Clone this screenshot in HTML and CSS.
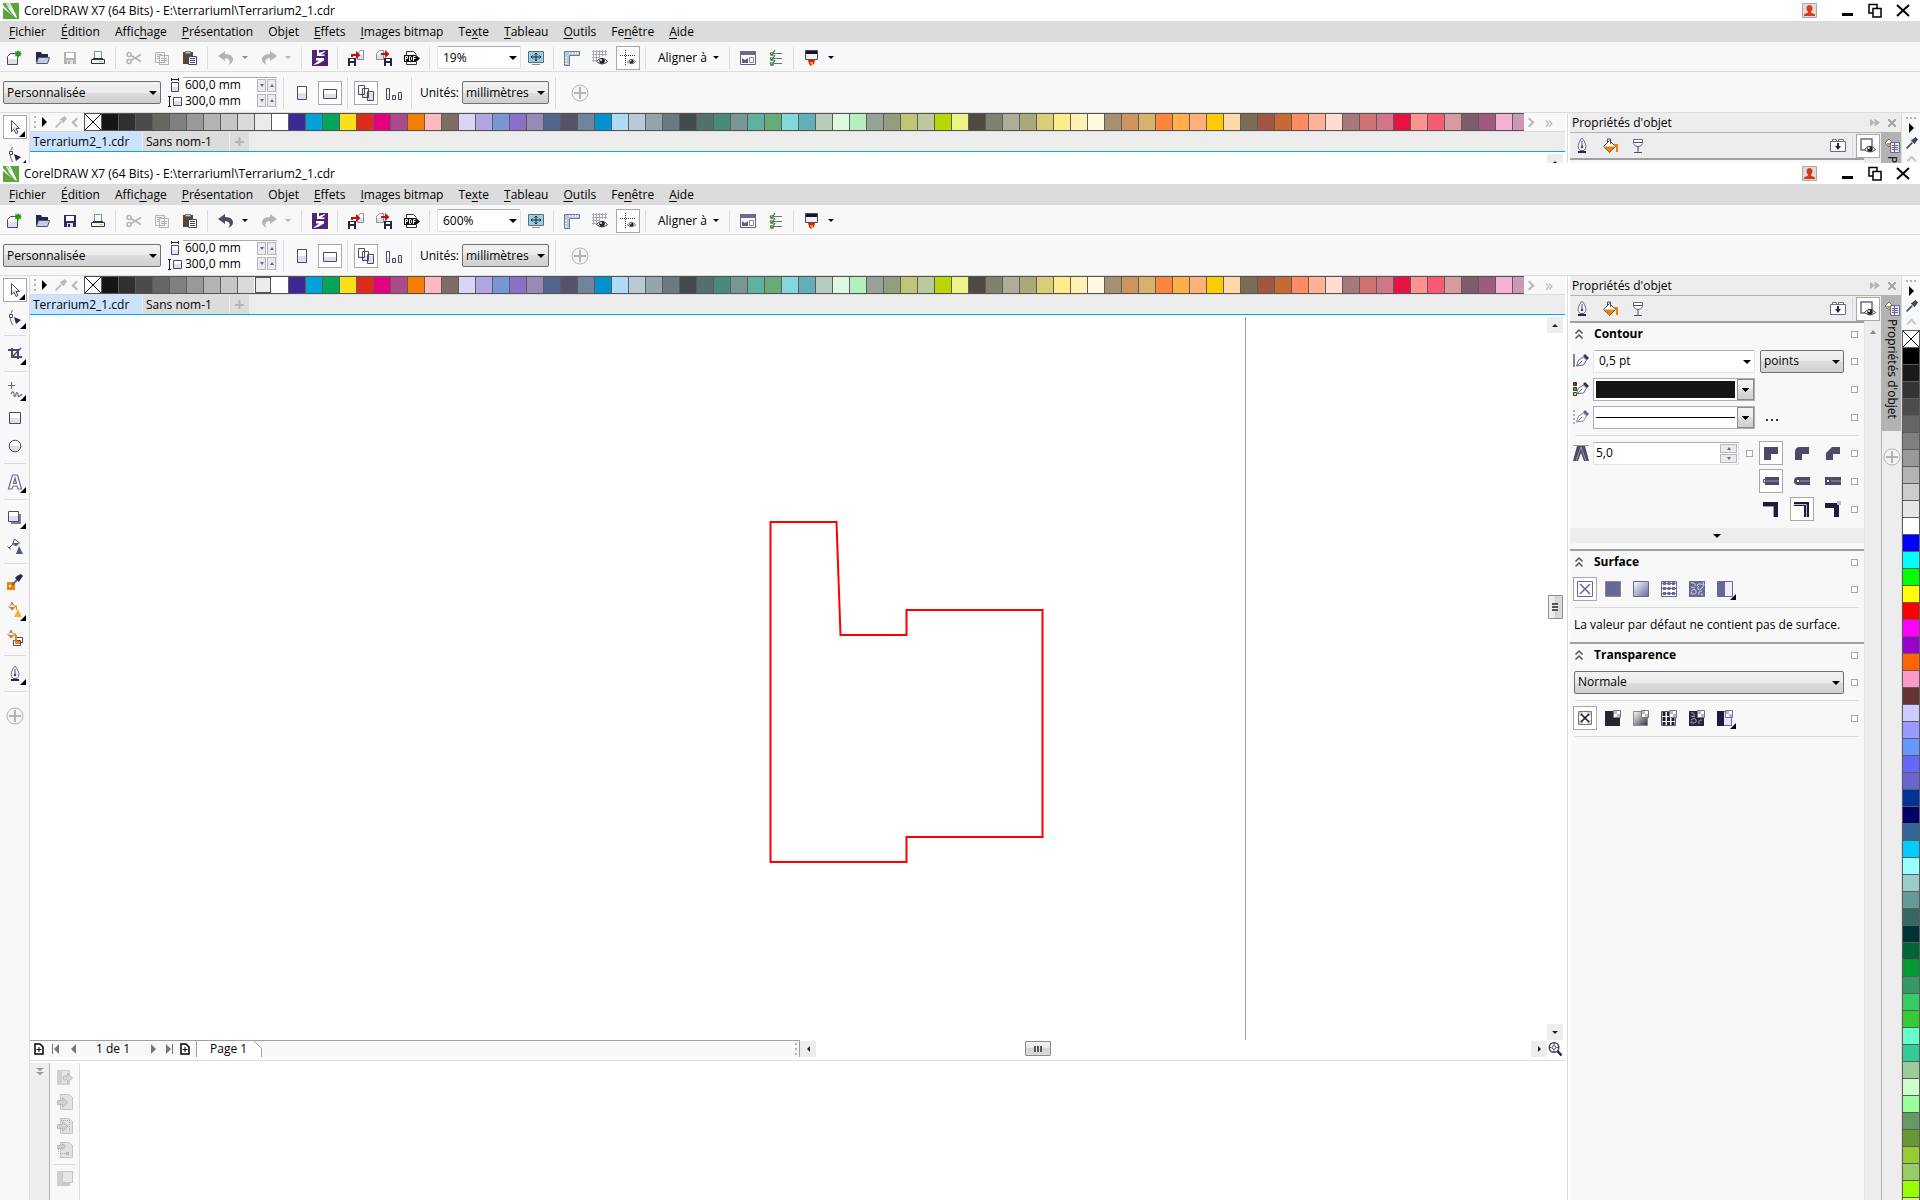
FILE: index.html
```html
<!DOCTYPE html>
<html lang="fr">
<head>
  <meta charset="UTF-8">
  <meta name="viewport" content="width=device-width, initial-scale=1.0">
  <title>CorelDRAW X7 (64 Bits) - E:\terrariuml\Terrarium2_1.cdr</title>
  <link rel="stylesheet" href="styles.css">
</head>
<body>

<svg class="sprite" aria-hidden="true">
  <defs>
    <linearGradient id="gPaper" x1="0" y1="0" x2="0" y2="1"><stop offset=".5" stop-color="#fff"/><stop offset=".5" stop-color="#dfdfea"/></linearGradient>
    <linearGradient id="gFill" x1="0" y1="0" x2="1" y2="1"><stop offset="0" stop-color="#fff"/><stop offset="1" stop-color="#67679a"/></linearGradient>
    <linearGradient id="gDark" x1="0" y1="0" x2="1" y2="1"><stop offset="0" stop-color="#fff"/><stop offset="1" stop-color="#333"/></linearGradient>
  </defs>
  <symbol id="logo" viewBox="0 0 16 16"><path fill="#5ba63c" d="M0 0h16v16H0z"/><path fill="#fff" d="M1 0l11 14 2 1-1-3L7 0H5l4 7-5-7H3l4 7zM0 2l6 7 4 4L0 5z"/></symbol>
  <symbol id="new" viewBox="0 0 16 16"><path fill="url(#gPaper)" stroke="#4c4a66" d="M1.500 6.500l3-3h7v11h-10z"/><path fill="#249a0c" d="M12 0l1.200 1.800L15 1l-.5 2 1.500.5-1.500 1 .5 2-1.800-.8L12 8l-1-2.300L9 6.500l.5-2L8 3.500 9.500 3 9 1l2 .8z"/></symbol>
  <symbol id="open" viewBox="0 0 16 16"><path fill="#26264a" d="M2 13V2h5l1 2h6v3H5z"/><path fill="#c9cde0" stroke="#55557c" d="M4.500 7.500h11l-2 6h-11z"/></symbol>
  <symbol id="save" viewBox="0 0 16 16"><path fill="currentColor" d="M2 2h12v12H2z"/><path fill="#fff" d="M4 3h8v5H4z"/><path fill="#dde" d="M5 10h6v4H5z"/><path fill="currentColor" d="M6 11h2v3H6z"/></symbol>
  <symbol id="print" viewBox="0 0 16 16"><path fill="#fff" stroke="#5aa58c" d="M4.500 9V1.500h7V9"/><path fill="#f4f4f8" stroke="#33334d" d="M1.500 9.500h13v4h-13z"/><path stroke="#e8dc30" d="M9 11.500h4"/><path stroke="#33334d" stroke-width="2" d="M3 9h10"/></symbol>
  <symbol id="cut" viewBox="0 0 16 16"><g fill="none" stroke="currentColor" stroke-width="1.500"><circle cx="3" cy="4.500" r="2"/><circle cx="3" cy="11.500" r="2"/><path d="M5 5.500l10 6M5 10.500l10-6"/></g></symbol>
  <symbol id="copy" viewBox="0 0 16 16"><g fill="#f4f4f4" stroke="currentColor"><path d="M1.500 2.500h9v10h-9zM5.500 5.500h9v9h-9z"/><path d="M3 4.500h5M7 8.500h6M7 10.500h6M7 12.500h4M3 6.500h2M3 8.500h2"/></g></symbol>
  <symbol id="paste" viewBox="0 0 16 16"><path fill="#57483a" d="M1 2h10v12H1z"/><path fill="#bcd" stroke="#777" d="M3.500 1.500h5v2h-5z"/><path fill="#fff" stroke="#3c4664" d="M6.500 6.500h8v8h-8z"/><path stroke="#3c4664" d="M8 8.500h5M8 10.500h5M8 12.500h5"/></symbol>
  <symbol id="undo" viewBox="0 0 16 16"><path fill="currentColor" d="M0 6l7-5v3c6 0 8 3 8 5.500S13 14 10 15c2-2 2-3 1.500-4.500S9 8 7 8v3z"/></symbol>
  <symbol id="redo" viewBox="0 0 16 16"><path fill="currentColor" d="M16 6L9 1v3c-6 0-8 3-8 5.500S3 14 6 15c-2-2-2-3-1.500-4.500S7 8 9 8v3z"/></symbol>
  <symbol id="search" viewBox="0 0 16 16"><path fill="#4f2479" d="M0 0h16v16H0z"/><path fill="#fff" d="M5 0h2v3l6-2v1L9 4.500h4L12 6H5zM4 8h8v2.500L6 14l-5 1 6-4.500H4z"/></symbol>
  <symbol id="import" viewBox="0 0 16 16"><path fill="url(#gPaper)" stroke="#4c4a66" stroke-opacity=".6" d="M9.500 3.500l3-3h3v9h-6z"/><path fill="#26264a" d="M0 8h8v8H0z"/><path fill="#fff" d="M2 9h4v2H2zM2 13h4v3H2z"/><path fill="none" stroke="#c3120a" stroke-width="2" d="M4 7V5h5"/><path fill="#c3120a" d="M8 1l4.500 4L8 9z"/></symbol>
  <symbol id="export" viewBox="0 0 16 16"><path fill="url(#gPaper)" stroke="#4c4a66" stroke-opacity=".6" d="M.5 3.500l3-3h4v9h-7z"/><path fill="#26264a" d="M8 8h8v8H8z"/><path fill="#fff" d="M10 9h4v2h-4zM10 13h4v3h-4z"/><path stroke="#c3120a" stroke-width="2" d="M5 4h5"/><path fill="#c3120a" d="M9 0l4.500 4L9 8z"/></symbol>
  <symbol id="pdf" viewBox="0 0 16 16"><path fill="#fff" stroke="#33334d" d="M2.500 5V1.500h7l3 3M2.500 11v3.500h10V12"/><path fill="#111" d="M0 5h12l4 3.500-4 3.500H0z"/><path fill="none" stroke="#fff" d="M1.500 11V6.500h2v2h-2M5.500 6.500h1l1 1v2l-1 1h-1zM9.500 11V6.500h2M9.500 8.500h2"/></symbol>
  <symbol id="fit" viewBox="0 0 16 16"><path fill="#8fd0dd" stroke="#6b6b80" d="M.5 1.500h15v11H.5z"/><path fill="none" stroke="#1d1d33" d="M8 3v8M3 7h10M6.500 4.500L8 3l1.500 1.500M6.500 9.500L8 11l1.500-1.500M4.500 5.500L3 7l1.500 1.500M11.500 5.500L13 7l-1.500 1.500"/><path fill="#8a8aa0" d="M4 14h8v1H4z"/></symbol>
  <symbol id="ruler" viewBox="0 0 16 16"><path fill="#b9c8dc" stroke="#6c7898" d="M.5 1.500h15v4h-10v10h-5z"/><path stroke="#fff" d="M5.500 2v2M8.500 2v2M11.500 2v2M13.500 2v2M1 7.500h2M1 10.500h2M1 13.500h2"/></symbol>
  <symbol id="eye" viewBox="0 0 12 8"><path fill="#fff" stroke="#444" d="M.5 4.500Q6-2 11.500 4.500 6 9.500.5 4.500z"/><circle cx="6" cy="4" r="2.800" fill="#222"/><circle cx="5" cy="3" r="1" fill="#fff"/></symbol>
  <symbol id="grideye" viewBox="0 0 16 16"><path stroke="#aab" fill="none" d="M1.500 0v12M4.500 0v12M7.500 0v8M10.500 0v6M13.500 0v6M0 1.500h15M0 4.500h15M0 7.500h7M0 10.500h5"/><use href="#eye" x="4" y="7" width="12" height="8"/></symbol>
  <symbol id="guides" viewBox="0 0 16 16"><path stroke="#333" stroke-dasharray="1 1" fill="none" d="M5.500 0v16M0 5.500h16"/><use href="#eye" x="7" y="8" width="9" height="7"/></symbol>
  <symbol id="options" viewBox="0 0 16 16"><path fill="#fff" stroke="#5f5f80" d="M.5 1.500h15v13H.5z"/><path fill="#6b6b8c" d="M0 1h16v4H0z"/><path fill="#5d5d94" d="M2 8l3 2 3-2v5H2z"/><path fill="none" stroke="#889" d="M9.500 7.500h4v5h-4z"/></symbol>
  <symbol id="checks" viewBox="0 0 16 16"><path stroke="#6b6b8c" d="M6 3.500h8M6 8.500h8M6 13.500h8"/><path fill="none" stroke="#999" d="M2.500 2.500h3v3h-3zM2.500 7.500h3v3h-3zM2.500 12.500h3v3h-3z"/><path fill="none" stroke="#2b8a1b" stroke-width="1.200" d="M2 3l2 2 3-5M2 8l2 2 3-5M2 13l2 2 3-5"/></symbol>
  <symbol id="launch" viewBox="0 0 16 16"><path fill="#f0f0f4" stroke="#4c4a66" d="M1.500.5h12v9h-12z"/><path fill="#15152c" d="M2 1h11v3H2z"/><path fill="#e02010" d="M4 10h7l-1 4-3 2-2-2z"/><path fill="#ffa000" d="M6 12h3v3H7z"/></symbol>
  <symbol id="page-w" viewBox="0 0 16 16"><path fill="url(#gPaper)" stroke="#4c4a66" d="M4.500 5.500h7v9h-7z"/><path fill="none" stroke="#222" d="M4 2.500h8M4.500 1v3M11.500 1v3"/></symbol>
  <symbol id="page-h" viewBox="0 0 16 16"><path fill="url(#gPaper)" stroke="#4c4a66" d="M6.500 4.500h8v8h-8z"/><path fill="none" stroke="#222" d="M2.500 3v10M1 3.500h3M1 13.500h3"/></symbol>
  <symbol id="portrait" viewBox="0 0 16 16"><path fill="url(#gPaper)" stroke="#4c4a66" d="M3.500 1.500h9v13h-9z"/></symbol>
  <symbol id="landscape" viewBox="0 0 16 16"><path fill="url(#gPaper)" stroke="#4c4a66" d="M1.500 4.500h13v9h-13z"/></symbol>
  <symbol id="allpages" viewBox="0 0 16 16"><path fill="url(#gPaper)" stroke="#4c4a66" d="M.5.5h6v9h-6zM4.500 3.500h6v9h-6zM9.500 6.500h6v9h-6z"/></symbol>
  <symbol id="curpage" viewBox="0 0 16 16"><path fill="url(#gPaper)" stroke="#4c4a66" d="M.5 3.500h3v11h-3zM6.500 10.500h3v4h-3zM12.500 7.500h3v7h-3z"/></symbol>
  <symbol id="plus" viewBox="0 0 18 18"><circle cx="9" cy="9" r="8" fill="#f4f4f4" stroke="#b4b4b4"/><path stroke="#b4b4b4" stroke-width="2" d="M9 3v12M3 9h12"/></symbol>
  <symbol id="user" viewBox="0 0 16 16"><path fill="#ddd" stroke="#a9a9a9" d="M.5.5h14v14H.5z"/><path fill="#d63c14" d="M7.500 2c2 0 3 1.500 3 3.500S9 8 9 9.500l4 2V13H2v-1.500l4-2C6 8 4.500 7.500 4.500 5.500s1-3.500 3-3.500z"/></symbol>
  <symbol id="min" viewBox="0 0 16 16"><path d="M3 10h11v3H3z"/></symbol>
  <symbol id="restore" viewBox="0 0 16 16"><path fill="none" stroke="#000" stroke-width="1.500" d="M6 10H2V1.500h8V5M6 5.500h8V14H6z"/></symbol>
  <symbol id="close" viewBox="0 0 16 16"><path stroke="#000" stroke-width="2" d="M2 2l12 11M14 2L2 13"/></symbol>
  <symbol id="pick" viewBox="0 0 16 16"><path fill="url(#gPaper)" stroke="#4c4a66" d="M4.500 1.500v11l2.500-2 2 4 2-1-2-4h3.500z"/></symbol>
  <symbol id="shape" viewBox="0 0 16 16"><path fill="none" stroke="#6b6b8c" d="M5.500 0Q1 7 5.500 15"/><path fill="#fff" stroke="#4c4a66" d="M2.500 4.500h3v3h-3z"/><path fill="#26264a" d="M7 7l7 3-5 4z"/></symbol>
  <symbol id="crop" viewBox="0 0 16 16"><path fill="none" stroke="#4c4a66" stroke-width="2" d="M5 2v9h10M1 4h10v9"/><path stroke="#4c4a66" stroke-width="1.500" d="M5 11l9-9"/></symbol>
  <symbol id="freehand" viewBox="0 0 16 16"><path fill="none" stroke="#6b6b8c" stroke-width="1.200" d="M4.500 0v7M1 3.500h7M4 12c2-4 3-2 3 1s2 1 2-1 2-2 2 1 2 1 4-1"/></symbol>
  <symbol id="rect" viewBox="0 0 16 16"><path fill="url(#gPaper)" stroke="#4c4a66" d="M2.500 2.500h11v11h-11z"/></symbol>
  <symbol id="ellipse" viewBox="0 0 16 16"><circle cx="8" cy="8" r="5.800" fill="url(#gPaper)" stroke="#4c4a66"/></symbol>
  <symbol id="text" viewBox="0 0 16 16"><path fill="#fff" stroke="#6b6b8c" stroke-width="1.200" fill-rule="evenodd" d="M1.500 15l4-14h5l4 14h-3.500l-1-3h-4l-1 3zM6.500 9.500h3L8 4z"/></symbol>
  <symbol id="shadow" viewBox="0 0 16 16"><path fill="#7c7c9e" d="M4 4h10v10H4z"/><path fill="url(#gPaper)" stroke="#4c4a66" d="M1.500 1.500h10v10h-10z"/></symbol>
  <symbol id="transp" viewBox="0 0 16 16"><path fill="#fff" stroke="#4c4a66" d="M7.500 1l5 4-3 2.500-4-1zM5.500 6.500L2 10M.5 8.500l3.500 3"/><path fill="#35507c" d="M5.500 5h6L9 7.500z"/><path fill="#4c5878" d="M12 8l4 8H9z"/></symbol>
  <symbol id="dropper" viewBox="0 0 16 16"><path fill="none" stroke="currentColor" stroke-width="2" d="M2 14l7-7"/><path fill="currentColor" d="M7 4l5 5 1-2 3-4-3-3-4 3z"/></symbol>
  <symbol id="colordrop" viewBox="0 0 16 16"><path fill="#ef8200" d="M0 8h8v8H0z"/><path fill="#fff" d="M2 11h2v2H2z"/><path stroke="#6b6b8c" stroke-width="2" d="M5 11l6-6"/><path fill="#26264a" d="M8 4l4 4 1-2 3-4-2-2-4 2z"/></symbol>
  <symbol id="bucket" viewBox="0 0 16 16"><path fill="#fff" stroke="#4c4a66" d="M7.500 2.500l6 6-6 6-6-6z"/><path fill="#ef8200" d="M2 8.500h11l-5.500 6z"/><path fill="none" stroke="#4c4a66" d="M5.500 5V1h3v5"/><path fill="none" stroke="#ef8200" stroke-width="2" d="M12 7h3v7"/></symbol>
  <symbol id="intfill" viewBox="0 0 16 16"><use href="#bucket" x="1" width="9" height="9"/><path fill="#f0b43c" d="M11 7l4 8H7z"/></symbol>
  <symbol id="outfill" viewBox="0 0 16 16"><use href="#bucket" width="9" height="9"/><path fill="#fff" stroke="#4c4a66" d="M8.500 7.500h7v5h-7zM6.500 10.500h7v5h-7z"/><path fill="#ef8200" d="M8 5h2v6h3v3H8z"/></symbol>
  <symbol id="pen" viewBox="0 0 16 16"><path fill="#f4f4fa" stroke="#6b6b8c" d="M7.500.5Q3 7 4.500 10.500l1.500 2h4l1.500-2Q13 7 8.500.5z"/><path stroke="#4c4a66" d="M8 3v5"/><circle cx="8" cy="9" r="1.300" fill="#4c4a66"/><path fill="#26264a" d="M4 13h8v2H4z"/></symbol>
  <symbol id="glass" viewBox="0 0 16 16"><path fill="#fff" stroke="#6b6b8c" d="M3.500 1.500h9v4q-1 3-4.500 3t-4.500-3z"/><path stroke="#4c4a66" d="M8 8v6M4 14.500h8M4 4.500h8"/></symbol>
  <symbol id="tabdown" viewBox="0 0 16 16"><path fill="#fff" stroke="#6b6b8c" d="M.5 3.500h15v10H.5zM2.500 1.500h4v2h-4zM8.500 1.500h5v2h-5z"/><path stroke="#26264a" stroke-width="2" d="M8 5v4"/><path fill="#26264a" d="M5 8h6l-3 4z"/></symbol>
  <symbol id="preview" viewBox="0 0 16 16"><path fill="#fff" stroke="#6b6b8c" stroke-width="1.500" d="M1 1h11v11H1z"/><use href="#eye" x="4" y="7" width="12" height="8"/></symbol>
  <symbol id="objprops" viewBox="0 0 16 16"><path fill="#fff" stroke="#6b6b8c" d="M1 6l4-4 4 4-4 4z"/><path fill="#ef8200" d="M2 6h6L5 9z"/><path fill="#e4e4f0" stroke="#6b6b8c" d="M6.500 5.500h9v10h-9z"/><path stroke="#6b6b8c" d="M8 8.500h6M8 10.500h6M8 12.500h6M10.500 6v9"/></symbol>
  <symbol id="up2" viewBox="0 0 10 12"><path fill="none" stroke="#555" stroke-width="1.500" d="M1.500 5.500L5 2l3.500 3.500M1.500 10.500L5 7l3.500 3.500"/></symbol>
  <symbol id="nib" viewBox="0 0 16 16"><path fill="#f4f4fa" stroke="#6b6b8c" d="M3.500 13l2-6 5-3 3 3-3 5z"/><path stroke="#6b6b8c" d="M4 13l5-5"/><path fill="#33315a" d="M10 3l2-2 4 4-2 2z"/></symbol>
  <symbol id="nib-w" viewBox="0 0 16 16"><path fill="#8080a0" d="M0 1h2v13H0z"/><use href="#nib" width="16" height="16"/></symbol>
  <symbol id="nib-c" viewBox="0 0 16 16"><path stroke="#333" fill="#e01010" d="M.5 1.500h3v3h-3z"/><path stroke="#333" fill="#10c040" d="M.5 6.500h3v3h-3z"/><path stroke="#333" fill="#ffe020" d="M.5 11.500h3v3h-3z"/><use href="#nib" width="16" height="16"/></symbol>
  <symbol id="nib-s" viewBox="0 0 16 16"><path stroke="#99a" stroke-width="2" stroke-dasharray="2 2" d="M1 1v14"/><use href="#nib" width="16" height="16"/></symbol>
  <symbol id="miter" viewBox="0 0 16 16"><path fill="#4c4a66" d="M4 1h8l4 15h-5l-3-8-3 8H0z"/><path stroke="#99a" fill="none" d="M0 .5h16M8 2L3 16M8 2l5 14"/></symbol>
  <symbol id="corner1" viewBox="0 0 16 16"><path fill="#4c4a66" d="M1 2h14v7H8v6H1z"/></symbol>
  <symbol id="corner2" viewBox="0 0 16 16"><path fill="#4c4a66" d="M1 15V7q0-5 5-5h9v7H8v6z"/></symbol>
  <symbol id="corner3" viewBox="0 0 16 16"><path fill="#4c4a66" d="M1 15V8l6-6h8v7H8v6z"/></symbol>
  <symbol id="cap1" viewBox="0 0 16 16"><path fill="#4c4a66" d="M2 4h14v8H2z"/><path stroke="#99a" d="M2 8h14"/><path fill="#fff" stroke="#4c4a66" d="M.5 6.500h2v3h-2z"/></symbol>
  <symbol id="cap2" viewBox="0 0 16 16"><path fill="#4c4a66" d="M16 4v8H4Q0 12 0 8t4-4z"/><path stroke="#99a" d="M6 8h10"/><path fill="#fff" d="M3 7h2v2H3z"/></symbol>
  <symbol id="cap3" viewBox="0 0 16 16"><path fill="#4c4a66" d="M0 4h16v8H0z"/><path stroke="#99a" d="M6 8h10"/><path fill="#fff" d="M2 7h2v2H2z"/></symbol>
  <symbol id="pos1" viewBox="0 0 16 16"><path fill="#1d1c3a" d="M0 1h15v15h-5V5H0z"/><path fill="none" stroke="#99a" d="M0 5.500h10.500V16"/></symbol>
  <symbol id="pos2" viewBox="0 0 16 16"><path fill="#1d1c3a" d="M0 1h15v15h-5V5H0z"/><path fill="none" stroke="#bbc" d="M0 3.500h12.500V16"/></symbol>
  <symbol id="pos3" viewBox="0 0 16 16"><path fill="#1d1c3a" d="M0 2h14v14H9V7H0z"/><path fill="#bbb" d="M12 0h4v4h-4z"/></symbol>
  <symbol id="f-none" viewBox="0 0 16 16"><path fill="#fff" stroke="#67679a" d="M.5.5h15v15H.5z"/><path stroke="#67679a" stroke-width="1.500" d="M3 3l10 10M13 3L3 13"/></symbol>
  <symbol id="f-solid" viewBox="0 0 16 16"><path fill="#67679a" stroke="#8d8590" d="M.5.5h15v15H.5z"/></symbol>
  <symbol id="f-grad" viewBox="0 0 16 16"><path fill="url(#gFill)" stroke="#67679a" d="M.5.5h15v15H.5z"/></symbol>
  <symbol id="f-pat" viewBox="0 0 16 16"><path fill="#fff" stroke="#67679a" d="M.5.5h15v15H.5z"/><path stroke="#67679a" stroke-width="3" stroke-dasharray="3 2" d="M3.500 1v14M8 1v14M12.500 1v14"/><path stroke="#67679a" d="M1 2.500h14M1 7.500h14M1 12.500h14"/></symbol>
  <symbol id="f-tex" viewBox="0 0 16 16"><path fill="#67679a" d="M0 0h16v16H0z"/><path fill="none" stroke="#d8d8e8" d="M2 2q5-1 4 3M8 5q0-3 4-2t1 4-4 1 1-3M2 10q4-3 5 0t-3 3-1-2M10 14q-1-4 3-4M2 6l4 1M13 15v-3M14 1l1 3"/></symbol>
  <symbol id="f-two" viewBox="0 0 16 16"><path fill="#eef" stroke="#67679a" d="M.5.5h15v15H.5z"/><path fill="#67679a" d="M1 1h7v14H1z"/></symbol>
  <symbol id="chk" viewBox="0 0 8 8"><path fill="#fff" stroke="#778" d="M.5.5h7v7h-7z"/><path fill="#bbb" d="M1 1h3v3H1zM4 4h3v3H4z"/></symbol>
  <symbol id="t-none" viewBox="0 0 16 16"><path fill="#fff" stroke="#778" d="M1.500 1.500h13v13h-13z"/><path fill="#ccc" d="M2 2h4v4H2zM10 2h4v4h-4zM6 6h4v4H6zM2 10h4v4H2zM10 10h4v4h-4z"/><path stroke="#1d1c3a" stroke-width="1.500" d="M4 4l8 8M12 4l-8 8"/></symbol>
  <symbol id="t-solid" viewBox="0 0 16 16"><path fill="#26262c" d="M0 1h15v15H0z"/><use href="#chk" x="8" width="8" height="8"/></symbol>
  <symbol id="t-grad" viewBox="0 0 16 16"><path fill="url(#gDark)" stroke="#889" d="M.5 1.500h14v14H.5z"/><use href="#chk" x="8" width="8" height="8"/></symbol>
  <symbol id="t-pat" viewBox="0 0 16 16"><path fill="#fff" stroke="#556" d="M.5 1.500h14v14H.5z"/><path stroke="#1d1c3a" stroke-width="3" stroke-dasharray="4 1" d="M3 2v13M7.500 2v13M12 2v13"/><use href="#chk" x="8" width="8" height="8"/></symbol>
  <symbol id="t-tex" viewBox="0 0 16 16"><path fill="#26243f" d="M0 1h15v15H0z"/><path fill="none" stroke="#aab" d="M2 3q4-1 3 3M2 10q4-3 5 0t-3 3-1-2M10 14q-1-4 3-4M2 6l4 1"/><use href="#chk" x="8" width="8" height="8"/></symbol>
  <symbol id="t-two" viewBox="0 0 16 16"><path fill="#e4e4f0" stroke="#67679a" d="M.5 1.500h14v14H.5z"/><path fill="#1d1c3a" d="M0 1h7v15H0z"/><use href="#chk" x="8" width="8" height="8"/></symbol>
  <symbol id="addpage" viewBox="0 0 10 12"><path fill="#fff" stroke="#000" stroke-width="1.500" d="M1 1h5l3 3v7H1z"/><path stroke="#000" d="M5 4v5M2.500 6.500h5"/></symbol>
  <symbol id="first" viewBox="0 0 8 10"><path fill="#777" d="M0 0h1v10H0zM7 0v10L2 5z"/></symbol>
  <symbol id="prev" viewBox="0 0 8 10"><path fill="#777" d="M6 0v10L1 5z"/></symbol>
  <symbol id="next" viewBox="0 0 8 10"><path fill="#777" d="M1 0v10l5-5z"/></symbol>
  <symbol id="last" viewBox="0 0 8 10"><path fill="#777" d="M7 0h1v10H7zM1 0v10l5-5z"/></symbol>
  <symbol id="navigator" viewBox="0 0 16 16"><circle cx="7" cy="6.500" r="4.800" fill="#fff" stroke="#4c4a66" stroke-width="1.500"/><circle cx="7" cy="6.500" r="1.800" fill="none" stroke="#4c4a66"/><path stroke="#4c4a66" d="M7 2v2M7 9v2M2.500 6.500h2M9.500 6.500h2"/><path stroke="#26264a" stroke-width="2.500" d="M10.500 10l4 4.500"/></symbol>
  <symbol id="tray1" viewBox="0 0 16 16"><path fill="#d0d0d0" d="M0 0h13v15H0z"/><path fill="#e6e6e6" d="M5 1h6v12H5z"/><path fill="#d8d8d8" stroke="#bbb" d="M6.500 6h4V3.500L15.500 8l-5 4.500V10h-4z"/></symbol>
  <symbol id="tray2" viewBox="0 0 16 16"><path fill="#e2e2e2" stroke="#c4c4c4" d="M3.500.5h9l3 3v12h-12z"/><path fill="#d0d0d0" stroke="#bbb" d="M.5 6.500h5v-3L11 8.500l-5.500 5v-3h-5z"/></symbol>
  <symbol id="tray3" viewBox="0 0 16 16"><path fill="#e2e2e2" stroke="#c4c4c4" d="M3.500.5h9l3 3v12h-12z"/><path fill="none" stroke="#aaa" stroke-dasharray="1 1" d="M4 2.500h8.500V14"/><path fill="#d0d0d0" stroke="#bbb" d="M.5 6.500h5v-3L11 8.500l-5.500 5v-3h-5z"/></symbol>
  <symbol id="tray4" viewBox="0 0 16 16"><path fill="#e2e2e2" stroke="#c4c4c4" d="M3.500.5h9l3 3v12h-12z"/><path fill="#d0d0d0" stroke="#bbb" d="M.5 3.500h5v-2L9 4.500l-3.500 3v-1h-5z"/><path fill="none" stroke="#aaa" stroke-dasharray="1 1" d="M1.500 7v4.500H9"/><path fill="none" stroke="#aaa" d="M9.500 10.500h2v2h-2z"/></symbol>
  <symbol id="tray5" viewBox="0 0 16 16"><path fill="#d0d0d0" d="M0 0h6l-1 15H0z"/><path fill="#c8c8c8" d="M5 12h8v3H5z"/><path fill="#e6e6e6" stroke="#c4c4c4" d="M5.500.5h10v11h-10z"/></symbol>
</svg>

<div id="windows"></div>

<template id="windowTemplate">
  <section class="window">
    <header class="titlebar">
      <svg class="icon"><use href="#logo"/></svg>
      <span class="title">CorelDRAW X7 (64 Bits) - E:\terrariuml\Terrarium2_1.cdr</span>
      <button class="wbtn user" aria-label="Compte"><svg class="icon"><use href="#user"/></svg></button>
      <button class="wbtn" aria-label="Réduire"><svg class="icon"><use href="#min"/></svg></button>
      <button class="wbtn" aria-label="Restaurer"><svg class="icon"><use href="#restore"/></svg></button>
      <button class="wbtn" aria-label="Fermer"><svg class="icon"><use href="#close"/></svg></button>
    </header>
    <nav class="menubar">
      <a href="#"><u>F</u>ichier</a><a href="#"><u>É</u>dition</a><a href="#">Affic<u>h</u>age</a><a href="#"><u>P</u>résentation</a><a href="#">Ob<u>j</u>et</a><a href="#"><u>E</u>ffets</a><a href="#"><u>I</u>mages bitmap</a><a href="#">Te<u>x</u>te</a><a href="#"><u>T</u>ableau</a><a href="#"><u>O</u>utils</a><a href="#">Fe<u>n</u>être</a><a href="#"><u>A</u>ide</a>
    </nav>

    <div class="toolbar">
      <button class="tool" aria-label="Nouveau"><svg class="icon"><use href="#new"/></svg></button>
      <button class="tool" aria-label="Ouvrir"><svg class="icon"><use href="#open"/></svg></button>
      <button class="tool save" aria-label="Enregistrer"><svg class="icon"><use href="#save"/></svg></button>
      <button class="tool" aria-label="Imprimer"><svg class="icon"><use href="#print"/></svg></button>
      <span class="sep"></span>
      <button class="tool off" aria-label="Couper"><svg class="icon"><use href="#cut"/></svg></button>
      <button class="tool off" aria-label="Copier"><svg class="icon"><use href="#copy"/></svg></button>
      <button class="tool" aria-label="Coller"><svg class="icon"><use href="#paste"/></svg></button>
      <span class="sep"></span>
      <button class="tool undo" aria-label="Annuler"><svg class="icon"><use href="#undo"/></svg></button>
      <button class="drop undo" aria-label="Liste annuler"></button>
      <button class="tool off" aria-label="Rétablir"><svg class="icon"><use href="#redo"/></svg></button>
      <button class="drop off" aria-label="Liste rétablir"></button>
      <span class="sep"></span>
      <button class="tool" aria-label="Rechercher du contenu"><svg class="icon"><use href="#search"/></svg></button>
      <span class="sep"></span>
      <button class="tool" aria-label="Importer"><svg class="icon"><use href="#import"/></svg></button>
      <button class="tool" aria-label="Exporter"><svg class="icon"><use href="#export"/></svg></button>
      <button class="tool" aria-label="Publier au format PDF"><svg class="icon"><use href="#pdf"/></svg></button>
      <span class="sep"></span>
      <label class="combo flat zoom"><select aria-label="Zoom"><option>19%</option><option>600%</option></select></label>
      <button class="tool" aria-label="Plein écran"><svg class="icon"><use href="#fit"/></svg></button>
      <span class="sep"></span>
      <button class="tool" aria-label="Règles"><svg class="icon"><use href="#ruler"/></svg></button>
      <button class="tool" aria-label="Grille"><svg class="icon"><use href="#grideye"/></svg></button>
      <button class="tool on" aria-label="Repères"><svg class="icon"><use href="#guides"/></svg></button>
      <span class="sep"></span>
      <button class="align">Aligner à</button>
      <span class="sep"></span>
      <button class="tool" aria-label="Options"><svg class="icon"><use href="#options"/></svg></button>
      <button class="tool" aria-label="Personnaliser"><svg class="icon"><use href="#checks"/></svg></button>
      <span class="sep"></span>
      <button class="tool" aria-label="Lancer"><svg class="icon"><use href="#launch"/></svg></button>
      <button class="drop" aria-label="Liste lancer"></button>
    </div>

    <div class="toolbar propbar">
      <label class="combo preset"><select aria-label="Format de page"><option>Personnalisée</option></select></label>
      <div class="dims">
        <svg class="icon"><use href="#page-w"/></svg>
        <div class="dim"><input aria-label="Largeur" value="600,0 mm"><button aria-label="Moins"></button><button class="inc" aria-label="Plus"></button></div>
        <svg class="icon"><use href="#page-h"/></svg>
        <div class="dim"><input aria-label="Hauteur" value="300,0 mm"><button aria-label="Moins"></button><button class="inc" aria-label="Plus"></button></div>
      </div>
      <span class="sep"></span>
      <button class="tool" aria-label="Portrait"><svg class="icon"><use href="#portrait"/></svg></button>
      <button class="tool on" aria-label="Paysage"><svg class="icon"><use href="#landscape"/></svg></button>
      <span class="sep"></span>
      <button class="tool on" aria-label="Toutes les pages"><svg class="icon"><use href="#allpages"/></svg></button>
      <button class="tool" aria-label="Page active"><svg class="icon"><use href="#curpage"/></svg></button>
      <span class="sep"></span>
      <label class="units">Unités: <span class="combo"><select><option>millimètres</option></select></span></label>
      <span class="sep"></span>
      <button class="tool add" aria-label="Ajouter"><svg class="icon big"><use href="#plus"/></svg></button>
    </div>

    <div class="workspace">
      <aside class="toolbox">
        <button class="tool on fly" aria-label="Sélection"><svg class="icon"><use href="#pick"/></svg></button>
        <button class="tool fly" aria-label="Forme"><svg class="icon"><use href="#shape"/></svg></button>
        <hr>
        <button class="tool fly" aria-label="Recadrage"><svg class="icon"><use href="#crop"/></svg></button>
        <hr>
        <button class="tool fly" aria-label="Main levée"><svg class="icon"><use href="#freehand"/></svg></button>
        <button class="tool" aria-label="Rectangle"><svg class="icon"><use href="#rect"/></svg></button>
        <button class="tool" aria-label="Ellipse"><svg class="icon"><use href="#ellipse"/></svg></button>
        <hr>
        <button class="tool fly" aria-label="Texte"><svg class="icon"><use href="#text"/></svg></button>
        <hr>
        <button class="tool fly" aria-label="Ombre portée"><svg class="icon"><use href="#shadow"/></svg></button>
        <button class="tool" aria-label="Transparence"><svg class="icon"><use href="#transp"/></svg></button>
        <hr>
        <button class="tool" aria-label="Pipette"><svg class="icon"><use href="#colordrop"/></svg></button>
        <button class="tool fly" aria-label="Remplissage interactif"><svg class="icon"><use href="#intfill"/></svg></button>
        <button class="tool" aria-label="Remplissage"><svg class="icon"><use href="#outfill"/></svg></button>
        <hr>
        <button class="tool fly" aria-label="Contour"><svg class="icon"><use href="#pen"/></svg></button>
        <hr>
        <button class="tool add" aria-label="Ajouter un outil"><svg class="icon big"><use href="#plus"/></svg></button>
      </aside>

      <main class="document">
        <div class="palette">
          <span class="grip"></span>
          <button class="play" aria-label="Menu palette"></button>
          <svg class="icon small"><use href="#dropper"/></svg>
          <span class="chev left"></span>
          <div class="swatches"></div>
          <span class="chev"></span>
          <span class="more">»</span>
        </div>
        <div class="tabs">
          <a class="active" href="#">Terrarium2_1.cdr</a><a href="#">Sans nom-1</a><button aria-label="Nouveau document">+</button>
        </div>
        <div class="stage">
          <div class="canvas">
            <svg class="drawing full" viewBox="0 0 1517 723" preserveAspectRatio="xMinYMin">
              <path class="page-edge" d="M1215.500 0V900"/>
              <path class="outline" d="M740.500 205h66l4 113h66v-25h136v227h-136v25h-136z"/>
            </svg>
          </div>
          <div class="vscroll">
            <button class="arrow up" aria-label="Haut"></button>
            <span class="thumb full"></span>
            <button class="arrow down full" aria-label="Bas"></button>
          </div>
        </div>
        <div class="pagenav full">
          <div class="pages">
            <button aria-label="Ajouter une page"><svg class="add-ic"><use href="#addpage"/></svg></button>
            <button aria-label="Première page"><svg class="nav-ic"><use href="#first"/></svg></button>
            <button aria-label="Page précédente"><svg class="nav-ic"><use href="#prev"/></svg></button>
            <span class="count">1 de 1</span>
            <button class="narrow" aria-label="Page suivante"><svg class="nav-ic"><use href="#next"/></svg></button>
            <button class="narrow" aria-label="Dernière page"><svg class="nav-ic"><use href="#last"/></svg></button>
            <button aria-label="Ajouter une page après"><svg class="add-ic"><use href="#addpage"/></svg></button>
            <a class="pagetab" href="#">Page 1</a>
            <span class="grip"></span>
          </div>
          <div class="hscroll">
            <button class="arrow west" aria-label="Gauche"></button>
            <span class="thumb"></span>
            <button class="arrow east" aria-label="Droite"></button>
            <button class="navigator" aria-label="Navigateur"><svg class="icon"><use href="#navigator"/></svg></button>
          </div>
        </div>
        <div class="tray full">
          <div class="collapse"><i></i><i></i></div>
          <div class="tray-tools">
            <svg class="icon"><use href="#tray1"/></svg>
            <svg class="icon"><use href="#tray2"/></svg>
            <svg class="icon"><use href="#tray3"/></svg>
            <svg class="icon"><use href="#tray4"/></svg>
            <hr>
            <svg class="icon"><use href="#tray5"/></svg>
          </div>
        </div>
      </main>

      <aside class="docker">
        <div class="docker-head">Propriétés d'objet <span class="ff"></span><button aria-label="Fermer le menu fixe"></button></div>
        <div class="docker-body">
          <div class="docker-main">
            <div class="docker-tools">
              <button class="tool" aria-label="Contour"><svg class="icon"><use href="#pen"/></svg></button>
              <button class="tool" aria-label="Surface"><svg class="icon"><use href="#bucket"/></svg></button>
              <button class="tool" aria-label="Transparence"><svg class="icon"><use href="#glass"/></svg></button>
              <button class="tool right" aria-label="Mode onglets"><svg class="icon"><use href="#tabdown"/></svg></button>
              <span class="sep"></span>
              <button class="tool on" aria-label="Aperçu"><svg class="icon"><use href="#preview"/></svg></button>
            </div>
            <div class="docker-scroll">
              <div class="props">
                <section class="full">
                  <h2><svg><use href="#up2"/></svg>Contour<i class="pin"></i></h2>
                  <div class="row">
                    <svg class="icon"><use href="#nib-w"/></svg>
                    <label class="combo flat wide"><select aria-label="Épaisseur"><option>0,5 pt</option></select></label>
                    <label class="combo pt"><select aria-label="Unité"><option>points</option></select></label>
                    <i class="pin"></i>
                  </div>
                  <div class="row">
                    <svg class="icon"><use href="#nib-c"/></svg>
                    <button class="picker" aria-label="Couleur"><span class="ink"></span></button>
                    <i class="pin"></i>
                  </div>
                  <div class="row">
                    <svg class="icon faded"><use href="#nib-s"/></svg>
                    <button class="picker" aria-label="Style"><span class="line"></span></button>
                    <button class="dots" aria-label="Paramètres"><b></b><b></b><b></b></button>
                    <i class="pin"></i>
                  </div>
                  <hr>
                  <div class="row">
                    <svg class="icon"><use href="#miter"/></svg>
                    <div class="spin"><input aria-label="Limite d'onglet" value="5,0"><span class="steps"><button class="inc" aria-label="Plus"></button><button aria-label="Moins"></button></span></div>
                    <i class="pin mid"></i>
                    <div class="trio"><button class="tool on" aria-label="Coin droit"><svg class="icon"><use href="#corner1"/></svg></button><button class="tool" aria-label="Coin arrondi"><svg class="icon"><use href="#corner2"/></svg></button><button class="tool" aria-label="Coin biseauté"><svg class="icon"><use href="#corner3"/></svg></button></div>
                    <i class="pin"></i>
                  </div>
                  <div class="row">
                    <div class="trio"><button class="tool on" aria-label="Extrémité carrée"><svg class="icon"><use href="#cap1"/></svg></button><button class="tool" aria-label="Extrémité ronde"><svg class="icon"><use href="#cap2"/></svg></button><button class="tool" aria-label="Extrémité étendue"><svg class="icon"><use href="#cap3"/></svg></button></div>
                    <i class="pin"></i>
                  </div>
                  <div class="row">
                    <div class="trio"><button class="tool" aria-label="Contour extérieur"><svg class="icon"><use href="#pos1"/></svg></button><button class="tool on" aria-label="Contour centré"><svg class="icon"><use href="#pos2"/></svg></button><button class="tool" aria-label="Contour intérieur"><svg class="icon"><use href="#pos3"/></svg></button></div>
                    <i class="pin"></i>
                  </div>
                  <button class="expand" aria-label="Plus d'options"></button>
                </section>
                <section class="full">
                  <h2><svg><use href="#up2"/></svg>Surface<i class="pin"></i></h2>
                  <div class="row fills">
                    <button class="tool on" aria-label="Aucune"><svg class="icon"><use href="#f-none"/></svg></button>
                    <button class="tool" aria-label="Uniforme"><svg class="icon"><use href="#f-solid"/></svg></button>
                    <button class="tool" aria-label="Dégradé"><svg class="icon"><use href="#f-grad"/></svg></button>
                    <button class="tool" aria-label="Motif vectoriel"><svg class="icon"><use href="#f-pat"/></svg></button>
                    <button class="tool" aria-label="Motif bitmap"><svg class="icon"><use href="#f-tex"/></svg></button>
                    <button class="tool fly" aria-label="Deux couleurs"><svg class="icon"><use href="#f-two"/></svg></button>
                    <i class="pin"></i>
                  </div>
                  <hr>
                  <p>La valeur par défaut ne contient pas de surface.</p>
                </section>
                <section class="full">
                  <h2><svg><use href="#up2"/></svg>Transparence<i class="pin"></i></h2>
                  <div class="row">
                    <label class="combo merge"><select aria-label="Mode de fusion"><option>Normale</option></select></label>
                    <i class="pin"></i>
                  </div>
                  <hr>
                  <div class="row fills">
                    <button class="tool on" aria-label="Aucune transparence"><svg class="icon"><use href="#t-none"/></svg></button>
                    <button class="tool" aria-label="Transparence uniforme"><svg class="icon"><use href="#t-solid"/></svg></button>
                    <button class="tool" aria-label="Transparence dégradée"><svg class="icon"><use href="#t-grad"/></svg></button>
                    <button class="tool" aria-label="Transparence vectorielle"><svg class="icon"><use href="#t-pat"/></svg></button>
                    <button class="tool" aria-label="Transparence bitmap"><svg class="icon"><use href="#t-tex"/></svg></button>
                    <button class="tool fly" aria-label="Transparence deux couleurs"><svg class="icon"><use href="#t-two"/></svg></button>
                    <i class="pin"></i>
                  </div>
                  <hr>
                </section>
              </div>
              <div class="docker-bar"></div>
            </div>
          </div>
          <div class="side">
            <a class="sidetab" href="#"><svg class="icon"><use href="#objprops"/></svg><span>Propriétés d'objet</span></a>
            <button class="tool add full" aria-label="Ajouter un menu fixe"><svg class="icon big"><use href="#plus"/></svg></button>
          </div>
        </div>
      </aside>

      <aside class="colorbar">
        <span class="grip flat"></span>
        <button class="play" aria-label="Menu couleurs"></button>
        <svg class="icon small"><use href="#dropper"/></svg>
        <span class="chev top"></span>
        <div class="column full"></div>
      </aside>
    </div>
  </section>
</template>

<script src="script.js"></script>
</body>
</html>
```
FILE: styles.css
```css
*, *::before, *::after {
  box-sizing: border-box;
}
body {
  margin: 0;
  font-family: "Open Sans", "Noto Sans", sans-serif;
  font-size: 12px;
  line-height: 16px;
  color: #000;
  background: #fff;
}
button, input, select {
  font: inherit;
  color: inherit;
  border: 0;
  padding: 0;
  margin: 0;
  background: none;
  border-radius: 0;
  outline: none;
}
a {
  color: inherit;
  text-decoration: none;
}
hr {
  border: 0;
  height: 1px;
  background: #dcdcdc;
  flex: none;
}
.sprite {
  position: absolute;
  width: 0;
  height: 0;
}
.icon {
  width: 16px;
  height: 16px;
  flex: none;
  display: block;
}
.icon.small {
  width: 13px;
  height: 13px;
}
.icon.big {
  width: 18px;
  height: 18px;
}

/* fenêtres */
#windows {
  height: 100vh;
  display: flex;
  flex-direction: column;
  overflow: hidden;
}
.window {
  display: flex;
  flex-direction: column;
  flex: 1;
  min-height: 0;
  overflow: hidden;
}
.window.behind {
  flex: none;
  height: 163px;
}
.titlebar {
  display: flex;
  align-items: center;
  flex: none;
  height: 21px;
  padding: 0 3px;
  background: #fff;
}
.title {
  flex: 1;
  margin-left: 5px;
}
.wbtn {
  width: 28px;
  display: flex;
  justify-content: center;
}
.wbtn.user {
  margin-right: 9px;
}
.menubar {
  display: flex;
  flex: none;
  align-items: center;
  gap: 15px;
  height: 21px;
  padding-left: 9px;
  background: #dcdcdc;
}
.menubar u {
  text-underline-offset: 2px;
}

/* barres d'outils */
.toolbar {
  display: flex;
  flex: none;
  align-items: center;
  height: 30px;
  padding-top: 2px;
  background: #f8f8f8;
  border-bottom: 1px solid #dcdcdc;
}
.propbar {
  height: 41px;
  padding-top: 1px;
}
.tool {
  position: relative;
  flex: none;
  width: 24px;
  height: 24px;
  margin: 2px;
  display: flex;
  align-items: center;
  justify-content: center;
}
.tool.on {
  background: #fff;
  border: 1px solid #a8a8a8;
}
.tool.off, .drop.off, .behind .save, .behind .undo {
  color: #b4b4b4;
}
.save {
  color: #2c2c5c;
}
.undo {
  color: #4c4a66;
}
.drop.undo {
  color: #000;
}
.behind .drop.undo {
  color: #8c8c8c;
}
.tool.fly::after {
  content: "";
  position: absolute;
  right: 1px;
  bottom: 1px;
  border: 3px solid #000;
  border-top-color: transparent;
  border-left-color: transparent;
}
.sep {
  flex: none;
  width: 1px;
  height: 22px;
  margin: 0 4px 0 3px;
  background: #dcdcdc;
}
.propbar .sep {
  height: 32px;
}
.drop {
  width: 15px;
  height: 24px;
  padding-left: 2px;
  display: flex;
  align-items: center;
}
.drop::after, .align::after {
  content: "";
  border: 3px solid transparent;
  border-top-color: currentColor;
  border-bottom: 0;
}
.align {
  display: flex;
  align-items: center;
  justify-content: space-between;
  height: 24px;
  width: 76px;
  padding: 0 7px 0 8px;
  white-space: nowrap;
}
.combo {
  position: relative;
  display: block;
  flex: none;
}
.combo select {
  appearance: none;
  display: block;
  width: 100%;
  height: 23px;
  padding: 0 14px 0 3px;
  border: 1px solid #707070;
  border-radius: 2px;
  background: linear-gradient(#f2f2f2, #ebebeb 50%, #dddddd 50%, #cfcfcf);
}
.combo.flat select {
  padding-left: 5px;
  border: 1px solid #e2e3ea;
  border-top-color: #abadb3;
  background: #fff;
}
.combo::after {
  content: "";
  position: absolute;
  right: 4px;
  top: 10px;
  border: 4px solid transparent;
  border-top-color: #000;
  border-bottom: 0;
  pointer-events: none;
}
.zoom {
  width: 84px;
  margin: 0 1px 0 3px;
}
.preset {
  width: 158px;
  margin: 0 6px 0 3px;
}
.units {
  display: flex;
  align-items: center;
  justify-content: space-between;
  width: 136px;
  padding: 0 3px 0 4px;
  white-space: nowrap;
}
.units .combo {
  width: 87px;
}
.dims {
  display: grid;
  grid-template-columns: 16px 94px;
  height: 32px;
  margin-right: 3px;
}
.dim {
  display: flex;
  align-items: center;
  gap: 1px;
  height: 16px;
  background: #fff;
  border-right: 1px solid #e2e3ea;
}
.dim:nth-of-type(1) {
  border-top: 1px solid #abadb3;
}
.dim input {
  flex: 1;
  min-width: 0;
  height: 15px;
  padding-left: 2px;
}
.dim button, .spin button {
  display: flex;
  align-items: center;
  justify-content: center;
  width: 9px;
  height: 13px;
  background: #ebebeb;
  border: 1px solid #b8b8b8;
}
.dim button::after, .spin button::after {
  content: "";
  border: 2px solid transparent;
  border-top: 3px solid #5468a8;
  border-bottom: 0;
}
.dim .inc::after, .spin .inc::after {
  border-top: 0;
  border-bottom: 3px solid #5468a8;
}
.propbar .add {
  margin-left: 8px;
}

/* espace de travail */
.workspace {
  display: flex;
  flex: 1;
  min-height: 0;
}
.toolbox {
  flex: none;
  width: 30px;
  padding-left: 1px;
  background: #f8f8f8;
  border-right: 1px solid #dcdcdc;
  overflow: hidden;
}
.toolbox .tool {
  margin-bottom: 4px;
}
.toolbox .tool:first-child {
  margin-top: 2px;
}
.toolbox hr {
  margin: 5px 3px 6px;
}
.toolbox .add.tool {
  margin-top: 12px;
}
.document {
  display: flex;
  flex-direction: column;
  flex: 1;
  min-width: 0;
}
.palette {
  display: flex;
  flex: none;
  align-items: center;
  height: 19px;
  padding-left: 4px;
  background: #f8f8f8;
  border-bottom: 1px solid #dcdcdc;
}
.grip {
  flex: none;
  width: 2px;
  height: 12px;
  background: repeating-linear-gradient(#b4b4b4 0 2px, transparent 2px 5px);
}
.play {
  width: 5px;
  margin: 0 6px;
}
.play::after {
  content: "";
  display: block;
  border: 5px solid transparent;
  border-left-color: #000;
  border-right: 0;
}
.palette .icon {
  margin-left: 1px;
  color: #b8b8b8;
}
.chev {
  flex: none;
  width: 7px;
  height: 7px;
  margin: 0 12px 0 2px;
  border: solid #b8b8b8;
  border-width: 2px 2px 0 0;
  transform: rotate(45deg);
}
.chev.left {
  margin: 0 4px 0 6px;
  transform: rotate(-135deg);
}
.more {
  width: 20px;
  font-size: 16px;
  color: #b4b4b4;
}
.swatches {
  display: flex;
  flex: 1;
  height: 18px;
  overflow: hidden;
  border: solid #545454;
  border-width: 1px 0 1px 1px;
}
.swatch {
  flex: none;
  width: 17px;
  height: 16px;
  border-right: 1px solid #5c5c5c;
}
.none {
  background:
    linear-gradient(to top right, transparent 47%, #000 48% 52%, transparent 53%),
    linear-gradient(to bottom right, transparent 47%, #000 48% 52%, transparent 53%),
    #fff;
}
.swatch.picked {
  border: 1px solid #545454;
  outline: 1px solid #fff;
  width: 16px;
  margin-right: 1px;
}
.tabs {
  display: flex;
  flex: none;
  height: 20px;
  background: #ededed;
  border-bottom: 1px solid #00a8f3;
}
.tabs a, .tabs button {
  height: 19px;
  line-height: 19px;
  padding: 0 3px;
  background: #dcdcdc;
}
.tabs a {
  width: 86px;
  margin-right: 1px;
  white-space: nowrap;
}
.tabs .active {
  width: 112px;
  background: #cce3ff;
}
.tabs button {
  width: 19px;
  font-size: 18px;
  font-weight: bold;
  color: #b4b4b4;
}
.stage {
  display: flex;
  flex: 1;
  min-height: 0;
  padding: 2px 2px 0 0;
}
.canvas {
  flex: 1;
  min-width: 0;
  min-height: 0;
  overflow: hidden;
}
.drawing {
  display: block;
  width: 100%;
  height: 100%;
}
.page-edge {
  stroke: #a0a0a0;
  fill: none;
}
.outline {
  stroke: #f00;
  stroke-width: 2;
  fill: none;
}
.vscroll {
  display: flex;
  flex-direction: column;
  justify-content: space-between;
  align-items: center;
  flex: none;
  width: 16px;
}
.arrow {
  display: flex;
  align-items: center;
  justify-content: center;
  flex: none;
  width: 16px;
  height: 16px;
  background: #ededed;
}
.arrow::after {
  content: "";
  border: 3px solid transparent;
}
.up::after {
  border-bottom-color: #222;
  border-top: 0;
}
.down::after {
  border-top-color: #222;
  border-bottom: 0;
}
.west::after {
  border-right-color: #222;
  border-left: 0;
}
.east::after {
  border-left-color: #222;
  border-right: 0;
}
.thumb {
  display: flex;
  align-items: center;
  justify-content: center;
  width: 26px;
  height: 15px;
  border: 1px solid #8c8c8c;
  border-radius: 1px;
  background: linear-gradient(#f4f4f4, #e6e6e6 50%, #d2d2d2 50%, #dcdcdc);
}
.thumb::after {
  content: "";
  width: 8px;
  height: 6px;
  background: repeating-linear-gradient(to right, #555 0 2px, #eee 2px 3px);
}
.vscroll .thumb {
  width: 15px;
  height: 24px;
  margin-bottom: 144px;
  background: linear-gradient(to right, #f4f4f4, #e6e6e6 50%, #d2d2d2 50%, #dcdcdc);
}
.vscroll .thumb::after {
  width: 6px;
  height: 8px;
  background: repeating-linear-gradient(#555 0 2px, #eee 2px 3px);
}

/* navigation entre les pages */
.pagenav {
  display: flex;
  flex: none;
  height: 21px;
  padding-bottom: 3px;
  border-bottom: 1px solid #dcdcdc;
}
.pages {
  display: flex;
  align-items: center;
  flex: 1;
  height: 17px;
  padding-left: 4px;
  background: #f8f8f8;
  border-top: 1px solid #a0a0a0;
  border-right: 1px solid #a0a0a0;
}
.pages button {
  width: 18px;
  height: 14px;
}
.pages .narrow {
  width: 15px;
}
.pages svg {
  display: block;
}
.add-ic {
  width: 10px;
  height: 12px;
}
.nav-ic {
  width: 8px;
  height: 10px;
}
.count {
  width: 62px;
  padding-left: 8px;
}
.pages .grip {
  margin: 0 2px 0 auto;
}
.pagetab {
  width: 66px;
  height: 16px;
  margin-left: -2px;
  padding-left: 14px;
  line-height: 15px;
  background:
    linear-gradient(#a0a0a0, #a0a0a0) left / 1px 100% no-repeat,
    linear-gradient(#a0a0a0, #a0a0a0) right bottom / 1px 8px no-repeat,
    linear-gradient(to top right, #fff 44%, #a0a0a0 45% 55%, #f8f8f8 56%) right top / 8px 8px no-repeat,
    #fff;
}
.hscroll {
  display: flex;
  align-items: center;
  justify-content: space-between;
  flex: 1;
}
.hscroll .thumb {
  margin: 0 auto 0 209px;
}
.navigator {
  width: 18px;
}
.tray {
  display: flex;
  flex: none;
  height: 139px;
  padding-top: 2px;
}
.collapse {
  width: 20px;
  padding-top: 5px;
  background: #ededed;
  border-right: 1px solid #b2b2b2;
}
.collapse i {
  display: block;
  width: 8px;
  margin: 0 auto 1px;
  border: 4px solid transparent;
  border-top: 3px solid #999;
  border-bottom: 0;
}
.tray-tools {
  width: 30px;
  padding: 7px 3px 0;
  background: #f8f8f8;
  border-right: 1px solid #dcdcdc;
}
.tray-tools .icon {
  margin: 0 auto 8px 4px;
}
.tray-tools hr {
  margin: -2px 0 6px;
}

/* menu fixe des propriétés */
.docker {
  display: flex;
  flex-direction: column;
  flex: none;
  width: 337px;
  padding-left: 5px;
  border-right: 1px solid #dcdcdc;
  background: linear-gradient(#dcdcdc, #dcdcdc) 2px 0 / 1px 100% no-repeat, #fff;
}
.docker-head {
  display: flex;
  align-items: center;
  flex: none;
  height: 20px;
  padding: 0 5px 0 2px;
  background: #ededed;
  border-bottom: 1px solid #b2b2b2;
}
.ff {
  width: 10px;
  height: 8px;
  margin-left: auto;
  background: #b4b4b4;
  clip-path: polygon(0 0, 45% 50%, 45% 0, 100% 50%, 45% 100%, 45% 50%, 0 100%);
}
.docker-head button {
  width: 8px;
  height: 8px;
  margin-left: 8px;
  background:
    linear-gradient(to top right, transparent 42%, #a8a8a8 43% 57%, transparent 58%),
    linear-gradient(to bottom right, transparent 42%, #a8a8a8 43% 57%, transparent 58%);
}
.docker-body {
  display: flex;
  flex: 1;
  min-height: 0;
}
.docker-main {
  display: flex;
  flex-direction: column;
  flex: 1;
  min-width: 0;
}
.docker-tools {
  display: flex;
  flex: none;
  align-items: center;
  height: 25px;
  background: #ededed;
}
.docker-tools .tool {
  margin: 0 4px 0 0;
}
.docker-tools .right {
  margin: 0 0 0 auto;
}
.docker-tools .sep {
  margin: 0 3px 0 2px;
}
.docker-tools .on {
  margin-right: 1px;
}
.docker-scroll {
  display: flex;
  flex: 1;
  min-height: 0;
}
.props {
  flex: 1;
  min-width: 0;
  background: #f8f8f8;
}
.behind .props {
  border-top: 2px solid #a0a0a0;
}
.docker-bar {
  width: 17px;
  background: #ededed;
  border-left: 1px solid #e4e4e4;
}
.window:not(.behind) .docker-bar::before {
  content: "";
  display: block;
  width: 6px;
  margin: 9px auto 0 5px;
  border: 3px solid transparent;
  border-bottom: 4px solid #888;
  border-top: 0;
}
.props section {
  border-top: 2px solid #a0a0a0;
}
.props h2 {
  display: flex;
  align-items: center;
  height: 24px;
  margin: 0;
  padding: 0 6px 2px 4px;
  font-size: 12px;
  font-weight: bold;
}
.props h2 svg {
  width: 10px;
  height: 12px;
  margin-right: 10px;
}
.row {
  display: flex;
  align-items: center;
  height: 28px;
  padding: 0 6px 0 3px;
}
.props hr {
  margin: 4px 5px 3px;
}
.props p {
  height: 31px;
  margin: 0;
  padding: 6px 4px;
  white-space: nowrap;
}
.pin {
  flex: none;
  width: 7px;
  height: 7px;
  margin-left: auto;
  border: 1px solid #a8a8a8;
  background: #fff;
}
.pin.mid {
  margin: 0 0 0 7px;
}
.wide, .picker {
  width: 162px;
  margin-left: 4px;
}
.pt {
  width: 84px;
  margin-left: 5px;
}
.merge {
  width: 270px;
  margin-left: 1px;
}
.picker {
  display: flex;
  align-items: center;
  height: 23px;
  padding: 0 0 0 2px;
  background: #fff;
  border: 1px solid #abadb3;
}
.picker::after {
  content: "";
  width: 17px;
  height: 21px;
  margin-left: 2px;
  border: 1px solid #8c8c8c;
  background:
    linear-gradient(#000, #000) center 8px / 7px 1px no-repeat,
    linear-gradient(#000, #000) center 9px / 5px 1px no-repeat,
    linear-gradient(#000, #000) center 10px / 3px 1px no-repeat,
    linear-gradient(#000, #000) center 11px / 1px 1px no-repeat,
    linear-gradient(#f2f2f2, #ebebeb 50%, #dddddd 50%, #cfcfcf);
}
.picker span {
  flex: 1;
}
.ink {
  height: 17px;
  background: #141615;
}
.line {
  height: 1px;
  background: #000;
}
.dots {
  display: flex;
  gap: 3px;
  margin: 6px 0 0 11px;
}
.dots b {
  width: 2px;
  height: 2px;
  background: #2c2c5c;
}
.faded {
  opacity: .75;
}
.spin {
  display: flex;
  align-items: center;
  width: 146px;
  height: 23px;
  margin-left: 4px;
  padding-right: 1px;
  background: #fff;
  border: 1px solid #e2e3ea;
  border-top-color: #abadb3;
}
.spin input {
  flex: 1;
  min-width: 0;
  padding-left: 2px;
}
.spin button {
  width: 17px;
  height: 9px;
}
.steps {
  display: flex;
  flex-direction: column;
  gap: 1px;
}
.trio {
  display: flex;
  gap: 7px;
  margin-left: auto;
  margin-right: 6px;
}
.trio .tool {
  margin: 0;
}
.trio + .pin {
  margin-left: 0;
}
.fills {
  gap: 4px;
}
.fills .tool {
  margin: 0;
}
.expand {
  display: block;
  width: 100%;
  height: 15px;
  margin: 5px 0 6px;
  background: #ededed;
}
.expand::after {
  content: "";
  display: block;
  width: 8px;
  margin: 0 auto;
  border: 4px solid transparent;
  border-top-color: #000;
  border-bottom: 0;
}
.side {
  width: 20px;
  background: #ededed;
  border-left: 1px solid #b2b2b2;
}
.sidetab {
  display: flex;
  flex-direction: column;
  align-items: center;
  gap: 3px;
  height: 135px;
  padding-top: 4px;
  background: #b2b2b2;
}
.sidetab span {
  writing-mode: vertical-rl;
  white-space: nowrap;
}
.side .add {
  margin: 14px 0 0 -2px;
}
.colorbar {
  display: flex;
  flex-direction: column;
  align-items: center;
  flex: none;
  width: 18px;
  padding-top: 4px;
  background: #f8f8f8;
}
.grip.flat {
  width: 10px;
  height: 2px;
  background: repeating-linear-gradient(to right, #b4b4b4 0 2px, transparent 2px 4px);
}
.colorbar .play {
  margin: 4px 0;
}
.colorbar .icon {
  color: #3c4a5c;
}
.chev.top {
  margin: 7px 0 3px;
  border-color: #c8c8c8;
  transform: rotate(-45deg);
}
.column {
  flex: 1;
  min-height: 0;
  width: 18px;
  overflow: hidden;
  border: 1px solid #5c5c5c;
  border-bottom: 0;
}
.column .swatch {
  width: 16px;
  height: 17px;
  border: 0;
  border-bottom: 1px solid #5c5c5c;
}
```
FILE: script.js
```js
// couleurs de la palette du document
const docColors = ('141615 31302e 4b4b4b 666663 808080 999999 b2b3b5 c5c7c6 d9dad9 ebebeb ffffff 3e2994 00a2d9 00a659 ' +
  'fbe019 df2b1b e4007f ae4a8c f27f00 ffb8bb 7e6d66 d9d3f4 b0a4e2 7896d3 8b70c7 958bb5 51658d 57526a 71849c 0093cf ' +
  'aedbf3 b8cad6 93a4ab 6b7980 424a4c 54706d 4a8a79 759894 60b09f 68ab7b 83d8de 62afba b7ccbb ddf9e1 b4f0bb 94a298 ' +
  '939d7c bec676 bcc99c b9d700 ecf488 4e4a43 818170 aeae98 aba87c d9cd75 feeb8b fff2b5 fff9df a79070 cf935f d7b26c ' +
  'fb853d ffae4a ffb278 fdcb00 ffd9a8 7c6c53 a05640 c66a34 ff8a63 ffb294 ffdccf a7787b cf7372 d2758b e51244 ff928c ' +
  'f75b74 d79a9f 7e5c6b a05a7c f5b1d4 cc98b4').split(' ');

// couleurs de la palette verticale
const sideColors = ('000000 1a1a1a 333333 4d4d4d 666666 808080 999999 b3b3b3 cccccc e6e6e6 ffffff 0000ff 00ffff 00ff00 ' +
  'ffff00 ff0000 ff00ff 9900cc ff6600 ff99cc 663333 ccccff 9999ff 6699ff 6666ff 6666cc 003399 000066 336699 00ccff ' +
  '99ffff 99cccc 669999 336666 003333 006633 009933 339966 33cc66 33cc33 66ffcc 33cc99 99cc99 ccffcc 99ff99 669966 ' +
  '669933 99cc33 99cc66 99ff00 ccff66').split(' ');

function fillPalette(box, colors, picked) {
  const none = document.createElement('div');
  none.className = 'swatch none';
  box.appendChild(none);
  colors.forEach((color, i) => {
    const el = document.createElement('div');
    el.className = i === picked ? 'swatch picked' : 'swatch';
    el.style.background = '#' + color;
    box.appendChild(el);
  });
}

function openWindow(zoom, behind) {
  const copy = document.getElementById('windowTemplate').content.cloneNode(true);
  const win = copy.querySelector('.window');
  win.querySelector('.zoom select').value = zoom;
  fillPalette(win.querySelector('.swatches'), docColors, behind ? -1 : 9);
  fillPalette(win.querySelector('.column'), sideColors, -1);
  if (behind) {
    win.classList.add('behind');
    win.querySelectorAll('.full').forEach(el => el.remove());
  }
  document.getElementById('windows').appendChild(copy);
}

openWindow('19%', true);
openWindow('600%', false);
```
